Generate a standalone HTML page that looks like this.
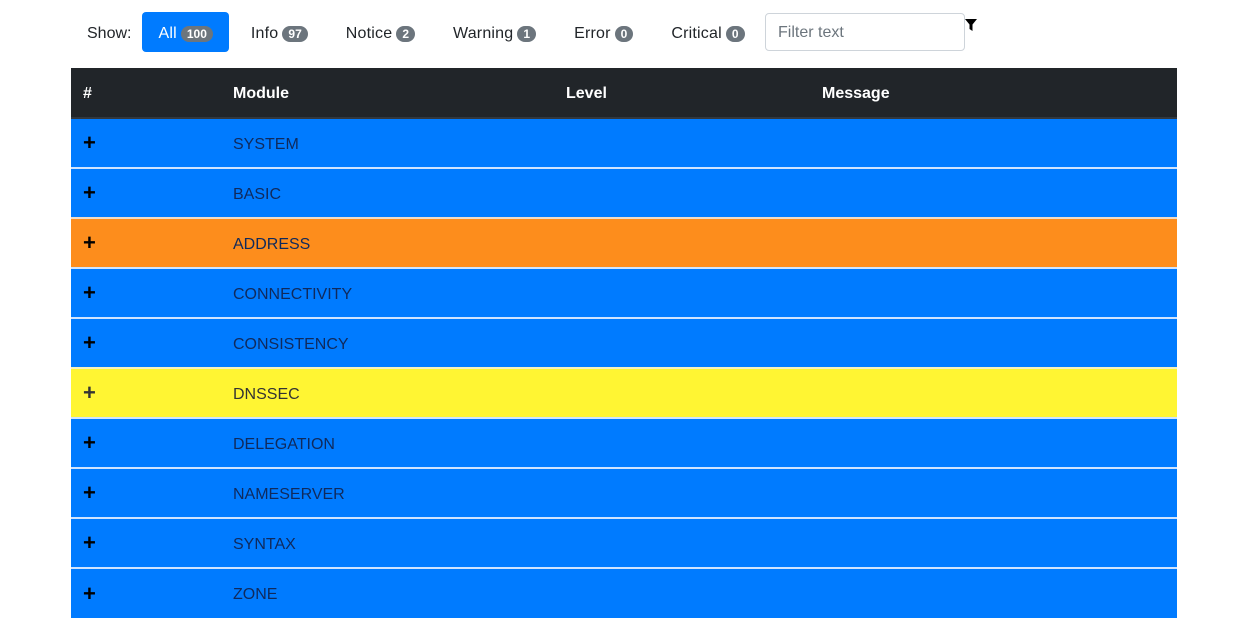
<!DOCTYPE html>
<html><head><meta charset="utf-8"><style>
body{margin:0;background:#fff;font-family:"Liberation Sans",sans-serif;font-size:16px;color:#212529;width:1241px;height:642px;overflow:hidden;position:relative}
.bar{position:absolute;top:14px;left:87px;height:40px;display:flex;align-items:center}
.lbl{margin-right:11px}
.btn{height:40px;display:flex;align-items:center;padding:0 16px;border-radius:4px;margin-right:6px;letter-spacing:0.2px}
.btn.act{background:#007bff;color:#fff;margin-top:-4px;height:40px;padding-top:3px;box-sizing:border-box}
.b{display:inline-block;background:#6c757d;color:#fff;font-size:12px;font-weight:bold;border-radius:9px;padding:1px 6px;margin-left:4px;line-height:14px;letter-spacing:0}
.inp{position:absolute;left:765px;top:13px;width:200px;height:38px;border:1px solid #ced4da;border-radius:4px;box-sizing:border-box;color:#6c757d;padding:11px 12px;font-size:16px;line-height:16px}
.fil{position:absolute;left:965px;top:19px}
table{position:absolute;left:71px;top:68px;width:1106px;border-collapse:collapse}
th{background:#212529;color:#fff;height:50px;text-align:left;font-weight:bold;padding:3px 12px 0;box-sizing:border-box;border-bottom:2px solid #32383e}
td{height:50px;padding:3px 12px 0;box-sizing:border-box;border-top:2px solid #cfe4ff;color:#102a5c}
tr.p td{background:#007bff}
tr.o td{background:#fd8d1c;border-top-color:#f0dcc8}
tr.y td{background:#fff533;color:#333;border-top-color:#f5f2c0}
td:first-child{font-weight:bold;color:#000;font-size:22px;padding-top:0}
</style></head><body>
<div class="bar"><span class="lbl">Show:</span>
<span class="btn act">All <span class="b">100</span></span>
<span class="btn">Info <span class="b">97</span></span>
<span class="btn">Notice <span class="b">2</span></span>
<span class="btn">Warning <span class="b">1</span></span>
<span class="btn">Error <span class="b">0</span></span>
<span class="btn">Critical <span class="b">0</span></span>
</div>
<div class="inp">Filter text</div>
<svg class="fil" width="12" height="13" viewBox="0 0 12 13"><path d="M0 0H12L7.5 5.5V12L4.5 10V5.5Z" fill="#000"/></svg>
<table>
<tr><th style="width:150px">#</th><th style="width:333px">Module</th><th style="width:256px">Level</th><th>Message</th></tr>
<tr class="p"><td>+</td><td>SYSTEM</td><td></td><td></td></tr>
<tr class="p"><td>+</td><td>BASIC</td><td></td><td></td></tr>
<tr class="o"><td>+</td><td>ADDRESS</td><td></td><td></td></tr>
<tr class="p"><td>+</td><td>CONNECTIVITY</td><td></td><td></td></tr>
<tr class="p"><td>+</td><td>CONSISTENCY</td><td></td><td></td></tr>
<tr class="y"><td>+</td><td>DNSSEC</td><td></td><td></td></tr>
<tr class="p"><td>+</td><td>DELEGATION</td><td></td><td></td></tr>
<tr class="p"><td>+</td><td>NAMESERVER</td><td></td><td></td></tr>
<tr class="p"><td>+</td><td>SYNTAX</td><td></td><td></td></tr>
<tr class="p"><td>+</td><td>ZONE</td><td></td><td></td></tr>
</table>
</body></html>
